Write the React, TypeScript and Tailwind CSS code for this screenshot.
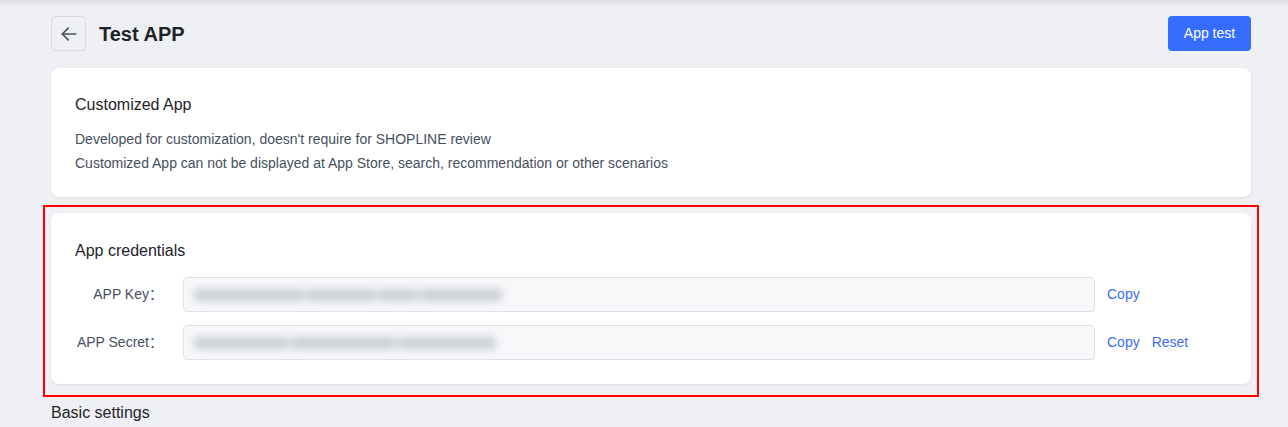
import React from "react";

const font = { fontFamily: '"Liberation Sans", "Noto Sans CJK SC", Arial, sans-serif' };

function BlurValue({ widths }: { widths: number[] }) {
  return (
    <div className="flex items-center gap-[2px] blur-[4px]">
      {widths.map((w, i) => (
        <div key={i} className="h-[12px] rounded-sm bg-[#c8ccd4]" style={{ width: w }} />
      ))}
    </div>
  );
}

function Row({ label, widths, actions }: { label: string; widths: number[]; actions: string[] }) {
  return (
    <div className="flex items-center h-[35px]">
      <div className="w-[108px] pr-[20px] text-right text-[14px] text-[#474f5e] shrink-0 whitespace-nowrap">{label}</div>
      <div className="flex-1 h-[35px] rounded-[4px] border border-[#dfe2ea] bg-[#f7f8fa] flex items-center pl-[10px]">
        <BlurValue widths={widths} />
      </div>
      <div className="w-[132px] pl-[12px] flex gap-[12px] text-[14px] text-[#3d6cf3] shrink-0">
        {actions.map((a) => (
          <span key={a}>{a}</span>
        ))}
      </div>
    </div>
  );
}

export default function App() {
  return (
    <div className="min-h-[427px] bg-[#eff0f4] relative" style={font}>
      <div className="absolute inset-x-0 top-0 h-[6px] bg-gradient-to-b from-[#dcdde2] to-transparent" />
      <div className="w-[1200px] ml-[51px] pt-[16px]">
        <div className="flex items-center justify-between h-[35px]">
          <div className="flex items-center gap-[13px]">
            <div className="w-[35px] h-[35px] rounded-[4px] border border-[#d7dae3] flex items-center justify-center text-[#474f5e]">
              <svg width="20" height="20" viewBox="0 0 24 24" fill="none" stroke="currentColor" strokeWidth="2" strokeLinecap="round" strokeLinejoin="round">
                <path d="M20 12H4" />
                <path d="M11 19l-7-7 7-7" />
              </svg>
            </div>
            <div className="text-[20px] font-bold text-[#1f2329]">Test APP</div>
          </div>
          <button className="h-[35px] w-[83px] rounded-[4px] bg-[#356dff] text-white text-[14px]">App test</button>
        </div>

        <div className="mt-[17px] bg-white rounded-[8px] shadow-[0_1px_3px_rgba(0,0,0,0.08)] px-[24px] pt-[25px] pb-[22px]">
          <div className="text-[16px] leading-[24px] text-[#1f2329]">Customized App</div>
          <div className="mt-[10px] text-[14px] leading-[24px] text-[#474f5e]">
            <div>Developed for customization, doesn't require for SHOPLINE review</div>
            <div>Customized App can not be displayed at App Store, search, recommendation or other scenarios</div>
          </div>
        </div>

        <div className="mt-[8px] -mx-[8px] border-2 border-[#ff0000] px-[6px] pt-[6px] pb-[11px]">
          <div className="bg-white rounded-[8px] shadow-[0_1px_3px_rgba(0,0,0,0.08)] px-[24px] pt-[26px] pb-[24px]">
            <div className="text-[16px] leading-[24px] text-[#1f2329]">App credentials</div>
            <div className="mt-[14px] flex flex-col gap-[13px]">
              <Row label="APP Key：" widths={[110, 70, 40, 82]} actions={["Copy"]} />
              <Row label="APP Secret：" widths={[95, 105, 98]} actions={["Copy", "Reset"]} />
            </div>
          </div>
        </div>

        <div className="mt-[4px] text-[16px] leading-[24px] text-[#1f2329]">Basic settings</div>
      </div>
    </div>
  );
}
